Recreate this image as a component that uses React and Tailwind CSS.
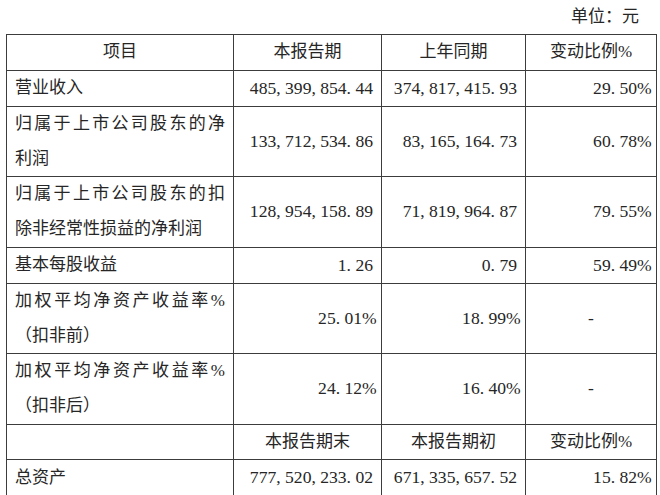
const rows = [
  { label: ['营业收入'], a: '485,399,854.44', b: '374,817,415.93', c: '29.50%' },
  { label: ['归属于上市公司股东的净', '利润'], a: '133,712,534.86', b: '83,165,164.73', c: '60.78%' },
  { label: ['归属于上市公司股东的扣', '除非经常性损益的净利润'], a: '128,954,158.89', b: '71,819,964.87', c: '79.55%' },
  { label: ['基本每股收益'], a: '1.26', b: '0.79', c: '59.49%' },
  { label: ['加权平均净资产收益率%', '（扣非前）'], a: '25.01%', b: '18.99%', c: '-' },
  { label: ['加权平均净资产收益率%', '（扣非后）'], a: '24.12%', b: '16.40%', c: '-' },
];

// SimSun-like number: every ASCII glyph takes half an em
function Num({ v }) {
  return (
    <span className="font-['Liberation_Serif',serif] text-[17.6px]">
      {[...v].map((ch, i) =>
        ch === ',' || ch === '.' ? (
          <span key={i} className="inline-block w-[0.5em] text-left">{ch}</span>
        ) : ch === '%' ? (
          <span key={i} className="inline-block w-[0.62em] text-left tracking-[-0.5px]">{ch}</span>
        ) : (
          ch
        )
      )}
    </span>
  );
}

function Label({ lines }) {
  if (lines.length === 1) return <span>{lines[0]}</span>;
  return (
    <>
      <span className="block [text-align-last:justify]">{lines[0]}</span>
      <span className="block">{lines[1]}</span>
    </>
  );
}

const cell = 'border border-[#3c3c3c] px-[8px] align-middle';

export default function App() {
  return (
    <div className="w-[660px] h-[495px] overflow-hidden bg-white text-[#262626] text-[17px] leading-[34.6px] font-['Liberation_Serif','Noto_Sans_CJK_SC',serif]">
      <div className="h-[34px] pr-[21px] text-right leading-[34px]">单位：元</div>
      <table className="ml-[6px] w-[650px] table-fixed border-collapse">
        <colgroup>
          <col className="w-[227px]" />
          <col className="w-[148px]" />
          <col className="w-[144px]" />
          <col className="w-[131px]" />
        </colgroup>
        <tbody>
          <tr>
            <td className={`${cell} text-center`}>项目</td>
            <td className={`${cell} text-center`}>本报告期</td>
            <td className={`${cell} text-center`}>上年同期</td>
            <td className={`${cell} text-center`}>变动比例%</td>
          </tr>
          {rows.map((r, i) => (
            <tr key={i}>
              <td className={cell}>
                <Label lines={r.label} />
              </td>
              <td className={`${cell} text-right`}>
                <Num v={r.a} />
              </td>
              <td className={`${cell} text-right`}>
                <Num v={r.b} />
              </td>
              <td className={`${cell} ${r.c === '-' ? 'text-center' : 'text-right'}`}>
                <Num v={r.c} />
              </td>
            </tr>
          ))}
          <tr>
            <td className={cell}></td>
            <td className={`${cell} text-center`}>本报告期末</td>
            <td className={`${cell} text-center`}>本报告期初</td>
            <td className={`${cell} text-center`}>变动比例%</td>
          </tr>
          <tr>
            <td className={cell}>总资产</td>
            <td className={`${cell} text-right`}>
              <Num v="777,520,233.02" />
            </td>
            <td className={`${cell} text-right`}>
              <Num v="671,335,657.52" />
            </td>
            <td className={`${cell} text-right`}>
              <Num v="15.82%" />
            </td>
          </tr>
          <tr className="h-[35.6px]">
            <td className={cell}></td>
            <td className={cell}></td>
            <td className={cell}></td>
            <td className={cell}></td>
          </tr>
        </tbody>
      </table>
    </div>
  );
}
